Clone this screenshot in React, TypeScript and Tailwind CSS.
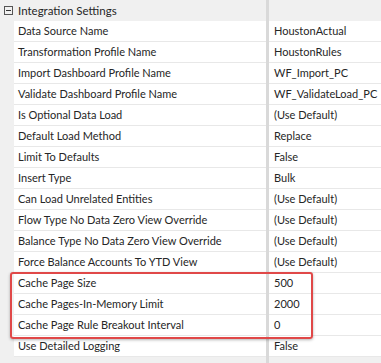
import React from 'react'

const rows: [string, string][] = [
    ['Data Source Name', 'HoustonActual'],
    ['Transformation Profile Name', 'HoustonRules'],
    ['Import Dashboard Profile Name', 'WF_Import_PC'],
    ['Validate Dashboard Profile Name', 'WF_ValidateLoad_PC'],
    ['Is Optional Data Load', '(Use Default)'],
    ['Default Load Method', 'Replace'],
    ['Limit To Defaults', 'False'],
    ['Insert Type', 'Bulk'],
    ['Can Load Unrelated Entities', '(Use Default)'],
    ['Flow Type No Data Zero View Override', '(Use Default)'],
    ['Balance Type No Data Zero View Override', '(Use Default)'],
    ['Force Balance Accounts To YTD View', '(Use Default)'],
    ['Cache Page Size', '500'],
    ['Cache Pages-In-Memory Limit', '2000'],
    ['Cache Page Rule Breakout Interval', '0'],
    ['Use Detailed Logging', 'False'],
]

const App = () => {
    return (
        <div
            className="relative w-[381px] h-[363px] overflow-hidden bg-[#f0f0f0] text-[11px] text-[#262626]"
            style={{ fontFamily: 'Lato, "Noto Sans", sans-serif' }}
        >
            {/* Section header */}
            <div className="flex h-[21px]">
                <div className="flex items-center w-[266px] pl-[4px] gap-[5px] text-[11.5px]">
                    <div className="w-[9px] h-[9px] border border-[#555] flex items-center justify-center">
                        <div className="w-[5px] h-px bg-[#333]" />
                    </div>
                    <span>Integration Settings</span>
                </div>
                <div className="w-[3px] bg-[#d9d9d9]" />
            </div>

            {/* Property rows */}
            {rows.map(([name, value]) => (
                <div key={name} className="flex h-[21px] pl-[14px]">
                    <div className="w-[252px] bg-white border-b border-[#e8e8e8] flex items-center pl-[4px] whitespace-nowrap overflow-hidden">
                        {name}
                    </div>
                    <div className="w-[3px] bg-[#d9d9d9]" />
                    <div className="flex-1 bg-white border-b border-[#e8e8e8] flex items-center pl-[5px] whitespace-nowrap">
                        {value}
                    </div>
                </div>
            ))}

            {/* Next section (cut off) */}
            <div className="flex h-[21px]">
                <div className="w-[266px] pl-[18px] pt-[5px] text-[#444]">Use Detailed Logging Level</div>
                <div className="w-[3px] bg-[#d9d9d9]" />
            </div>

            {/* Highlight box */}
            <div className="absolute left-[10px] top-[272px] w-[303px] h-[67px] border-2 border-[#e04848] rounded-[3px] shadow-[0_1px_3px_rgba(0,0,0,0.3)]" />
        </div>
    )
}

export default App
